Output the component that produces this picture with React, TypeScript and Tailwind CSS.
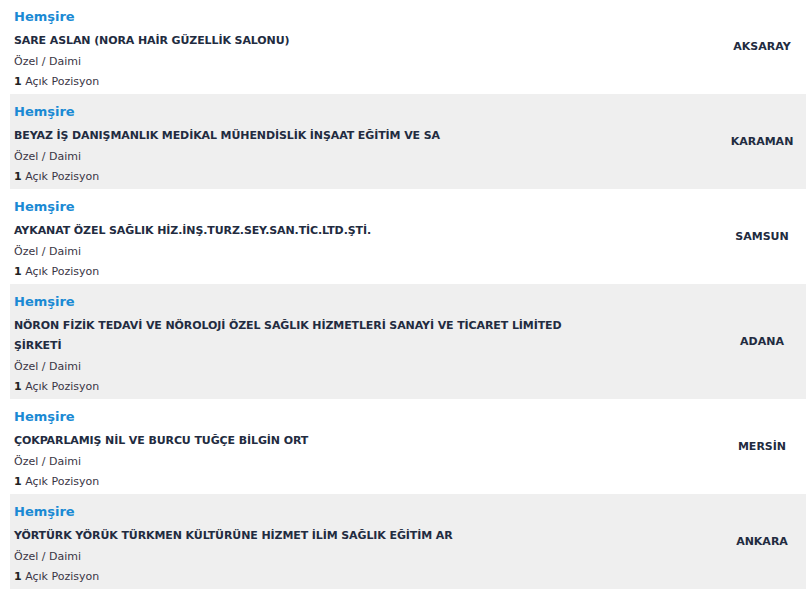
const jobs = [
  { title: "Hemşire", company: "SARE ASLAN (NORA HAİR GÜZELLİK SALONU)", type: "Özel / Daimi", count: 1, city: "AKSARAY" },
  { title: "Hemşire", company: "BEYAZ İŞ DANIŞMANLIK MEDİKAL MÜHENDİSLİK İNŞAAT EĞİTİM VE SA", type: "Özel / Daimi", count: 1, city: "KARAMAN" },
  { title: "Hemşire", company: "AYKANAT ÖZEL SAĞLIK HİZ.İNŞ.TURZ.SEY.SAN.TİC.LTD.ŞTİ.", type: "Özel / Daimi", count: 1, city: "SAMSUN" },
  { title: "Hemşire", company: "NÖRON FİZİK TEDAVİ VE NÖROLOJİ ÖZEL SAĞLIK HİZMETLERİ SANAYİ VE TİCARET LİMİTED ŞİRKETİ", type: "Özel / Daimi", count: 1, city: "ADANA" },
  { title: "Hemşire", company: "ÇOKPARLAMIŞ NİL VE BURCU TUĞÇE BİLGİN ORT", type: "Özel / Daimi", count: 1, city: "MERSİN" },
  { title: "Hemşire", company: "YÖRTÜRK YÖRÜK TÜRKMEN KÜLTÜRÜNE HİZMET İLİM SAĞLIK EĞİTİM AR", type: "Özel / Daimi", count: 1, city: "ANKARA" },
]

export default function App() {
  return (
    <div className="w-[806px] h-[595px] overflow-hidden bg-white font-['DejaVu_Sans',sans-serif]">
      <div className="ml-[10px] -mt-px">
        {jobs.map((job, i) => (
          <div
            key={i}
            className={`grid grid-cols-[1fr_88px] items-center ${i % 2 === 1 ? "bg-[#efefef]" : "bg-white"}`}
          >
            <div className="pl-1 pt-[8px] pb-[3px] pr-2 max-w-[596px]">
              <div className="text-[13px] leading-5 font-bold text-[#1a8ad4]">{job.title}</div>
              <div className="mt-1 text-[11px] leading-5 font-bold tracking-[-0.1px] text-[#222b40]">{job.company}</div>
              <div className="pt-px text-[11px] leading-[19px] text-[#3a3645]">{job.type}</div>
              <div className="pt-px text-[11px] leading-[19px] text-[#3a3645]">
                <span className="font-bold text-[#222]">{job.count}</span> Açık Pozisyon
              </div>
            </div>
            <div className="mt-[2px] text-center text-[11px] font-bold text-[#222b40]">{job.city}</div>
          </div>
        ))}
      </div>
    </div>
  )
}
